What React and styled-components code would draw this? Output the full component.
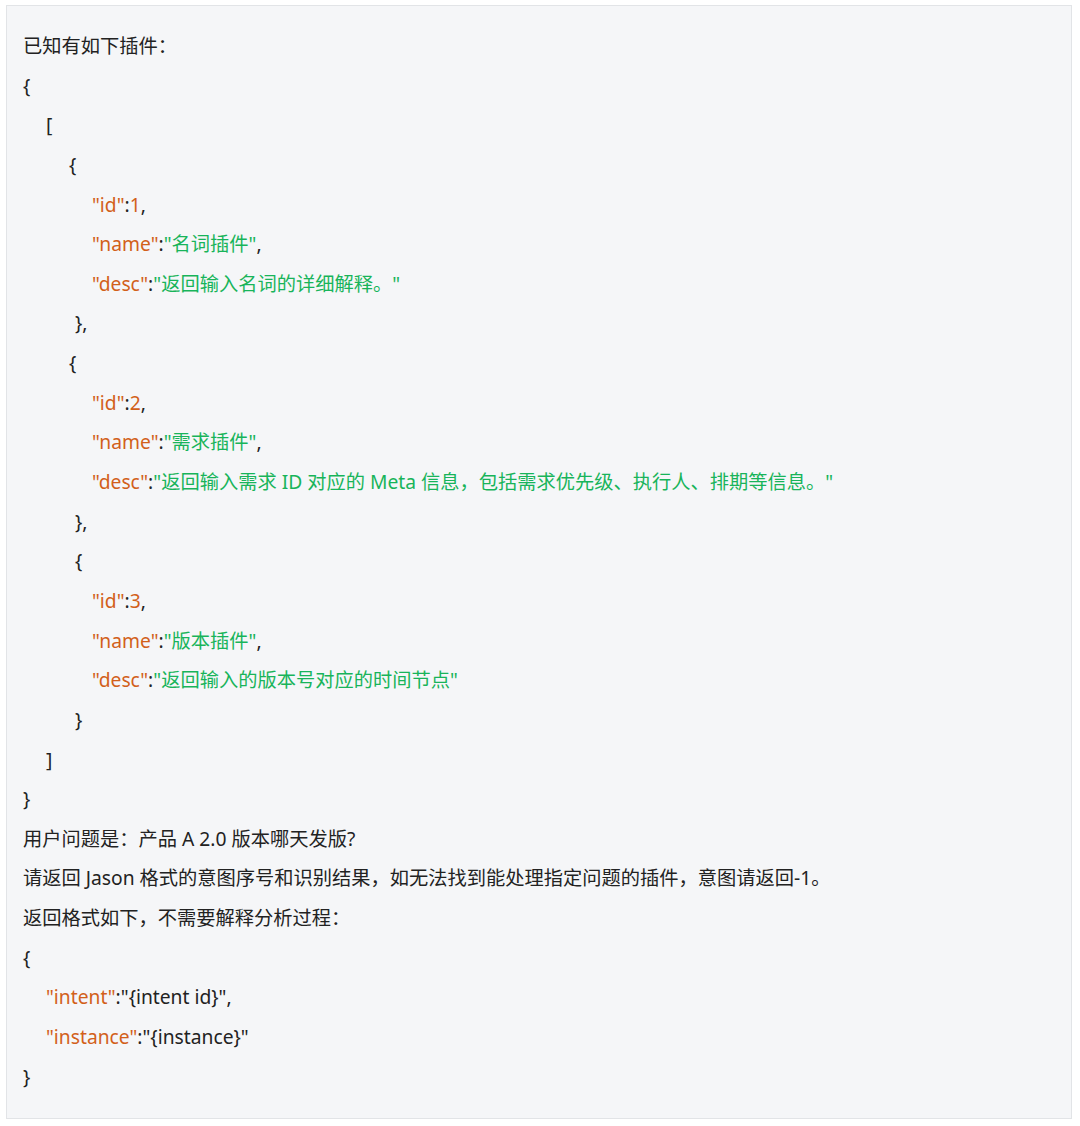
import styled, { createGlobalStyle } from "styled-components"

const GlobalStyle = createGlobalStyle`
body {
    margin: 0;
    background: #ffffff;
}
`

const Page = styled.div`
padding: 5px 8px 8px 6px;
`

const Block = styled.div`
background-color: #f5f6f8;
border: 1px solid #e2e4e7;
padding: 20px 16px 22px 16px;
font-family: "Noto Sans", "Noto Sans CJK SC", sans-serif;
font-size: 19.25px;
color: #222222;
`

const Line = styled.div`
line-height: 39.65px;
height: 39.65px;
white-space: pre;
padding-left: ${(props) => props.indent || 0}px;
`

const Key = styled.span`
color: #d2601a;
`

const Val = styled.span`
color: #18b45a;
`

const Num = styled.span`
color: #d2601a;
`

const plugins = [
    { id: 1, name: "名词插件", desc: "返回输入名词的详细解释。", open: 46, close: 52 },
    { id: 2, name: "需求插件", desc: "返回输入需求 ID 对应的 Meta 信息，包括需求优先级、执行人、排期等信息。", open: 46, close: 52 },
    { id: 3, name: "版本插件", desc: "返回输入的版本号对应的时间节点", open: 52, close: 52, last: true },
]

const App = () => {
    return (
        <Page>
            <GlobalStyle />
            <Block>
                <Line>已知有如下插件：</Line>
                <Line>{"{"}</Line>
                <Line indent={23}>[</Line>
                {plugins.map((p) => (
                    <div key={p.id}>
                        <Line indent={p.open}>{"{"}</Line>
                        <Line indent={69}>
                            <Key>"id"</Key>:<Num>{p.id}</Num>,
                        </Line>
                        <Line indent={69}>
                            <Key>"name"</Key>:<Val>"{p.name}"</Val>,
                        </Line>
                        <Line indent={69}>
                            <Key>"desc"</Key>:<Val>"{p.desc}"</Val>
                        </Line>
                        <Line indent={p.close}>{p.last ? "}" : "},"}</Line>
                    </div>
                ))}
                <Line indent={23}>]</Line>
                <Line>{"}"}</Line>
                <Line>用户问题是：产品 A 2.0 版本哪天发版?</Line>
                <Line>请返回 Jason 格式的意图序号和识别结果，如无法找到能处理指定问题的插件，意图请返回-1。</Line>
                <Line>返回格式如下，不需要解释分析过程：</Line>
                <Line>{"{"}</Line>
                <Line indent={23}>
                    <Key>"intent"</Key>:"{"{intent id}"}",
                </Line>
                <Line indent={23}>
                    <Key>"instance"</Key>:"{"{instance}"}"
                </Line>
                <Line>{"}"}</Line>
            </Block>
        </Page>
    )
}

export default App
